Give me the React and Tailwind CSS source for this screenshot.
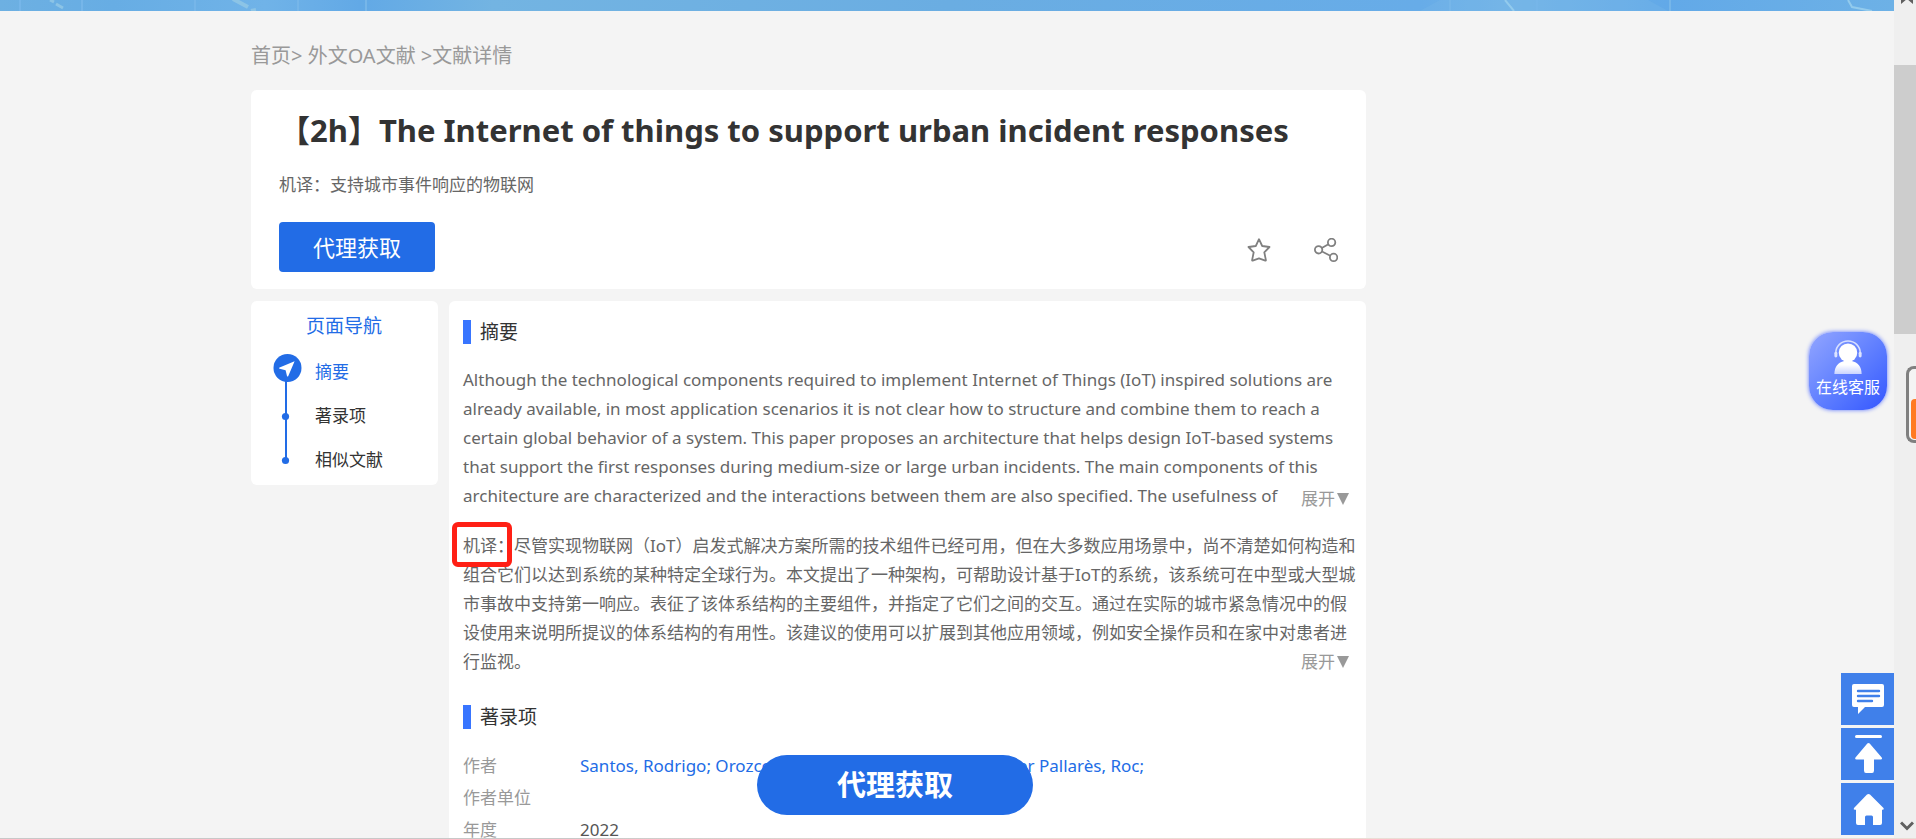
import React, { useState } from "react";

const abstractLines = [
  "Although the technological components required to implement Internet of Things (IoT) inspired solutions are",
  "already available, in most application scenarios it is not clear how to structure and combine them to reach a",
  "certain global behavior of a system. This paper proposes an architecture that helps design IoT-based systems",
  "that support the first responses during medium-size or large urban incidents. The main components of this",
  "architecture are characterized and the interactions between them are also specified. The usefulness of",
];

const translationLines = [
  "尽管实现物联网（IoT）启发式解决方案所需的技术组件已经可用，但在大多数应用场景中，尚不清楚如何构造和",
  "组合它们以达到系统的某种特定全球行为。本文提出了一种架构，可帮助设计基于IoT的系统，该系统可在中型或大型城",
  "市事故中支持第一响应。表征了该体系结构的主要组件，并指定了它们之间的交互。通过在实际的城市紧急情况中的假",
  "设使用来说明所提议的体系结构的有用性。该建议的使用可以扩展到其他应用领域，例如安全操作员和在家中对患者进",
  "行监视。",
];

const navItems = [
  { id: "abstract", label: "摘要" },
  { id: "record", label: "著录项" },
  { id: "similar", label: "相似文献" },
];

const Banner = () => (
  <header className="h-[11px] overflow-hidden bg-[#6aaee6]">
    <svg className="block h-full w-full" viewBox="0 0 1894 11" preserveAspectRatio="none" fill="none">
      <defs>
        <linearGradient id="sky" x1="0" x2="1">
          <stop offset="0" stopColor="#6db0e2" />
          <stop offset="0.06" stopColor="#67ade4" />
          <stop offset="0.14" stopColor="#70b3e8" />
          <stop offset="0.19" stopColor="#62a9e6" />
          <stop offset="0.26" stopColor="#73b4e2" />
          <stop offset="0.5" stopColor="#6aade2" />
          <stop offset="0.75" stopColor="#67ace8" />
          <stop offset="0.8" stopColor="#73b4e7" />
          <stop offset="0.88" stopColor="#62a9e8" />
          <stop offset="1" stopColor="#6db1e6" />
        </linearGradient>
      </defs>
      <rect width="1894" height="11" fill="url(#sky)" />
      <path d="M1420 11 1440 0H1648L1668 11Z" fill="#7ab8e8" fillOpacity="0.3" />
      <path d="M50 0l4 2M56 4l7 4" stroke="#8cc4e6" strokeWidth="3" />
      <path d="M233 -1l15 8M251 11l5 -1" stroke="#8cc4e6" strokeWidth="4" />
      <path d="M1505 0l9 11M1848 0l4 7 20 4" stroke="#93cbed" strokeWidth="2" />
      <path d="M20 0V11M82 0V11M195 0V11M298 0V11M366 0V11M1450 0V11M1537 0V11M1670 0V11" stroke="#76b6e9" strokeWidth="2" />
    </svg>
  </header>
);

const StarIcon = () => (
  <svg className="h-6 w-6" viewBox="0 0 24 24" fill="none" stroke="#808080" strokeWidth="1.8" strokeLinejoin="round">
    <path d="M12 1.200 15.200 8l7.300 1-5.200 5.300 1.600 7.800c.1.5-.2.7-.6.5L12 20.400l-6.300 2.200c-.4.2-.7 0-.6-.5l1.600-7.800L1.500 9l7.300-1Z" />
  </svg>
);

const ShareIcon = () => (
  <svg className="h-6 w-6" viewBox="0 0 24 24" fill="none" stroke="#808080" strokeWidth="1.8">
    <circle cx="4.6" cy="11.8" r="3.7" />
    <circle cx="17.6" cy="4.4" r="3.7" />
    <circle cx="19.6" cy="19.4" r="3.7" />
    <path d="m7.8 10 6.6-3.8M8 13.5l8.300 4.200" />
  </svg>
);

const SectionTitle = ({ children }) => (
  <div className="flex items-center gap-[9px]">
    <span className="h-6 w-2 bg-[#3875ff]" />
    <h2 className="text-[19px] leading-6 text-[#333]">{children}</h2>
  </div>
);

const ExpandButton = () => (
  <button className="flex shrink-0 items-center gap-[2px] text-[17px] leading-[29px] text-[#999]">
    展开
    <svg className="h-3 w-3" viewBox="0 0 12 12">
      <path d="M0 0h12L6 12Z" fill="#999" />
    </svg>
  </button>
);

const PageNav = () => {
  const [active, setActive] = useState("abstract");

  return (
    <nav className="w-[187px] shrink-0 rounded-md bg-white pt-[11px] pb-[3px]">
      <h3 className="pl-[55px] text-[19px] leading-7 text-[#226ce6]">页面导航</h3>
      <div className="flex gap-[13px] pt-[10px] pl-5">
        <svg className="mt-px h-[116px] w-[31px]" viewBox="0 0 31 116">
          <path d="M15 18V109" stroke="#226ce6" strokeWidth="2" />
          <circle cx="16.500" cy="17" r="14" fill="#226ce6" />
          <path d="M23.600 10.200 8.600 16.400c-.8.4-.7 1 .1 1.300l5.900 1.600 1.400 5.600c.3.8 1 .8 1.300 0Z" fill="#fff" />
          <circle cx="14.500" cy="65.500" r="3.600" fill="#226ce6" />
          <circle cx="14.500" cy="109.500" r="3.600" fill="#226ce6" />
        </svg>
        <ul className="text-[17px] leading-[44px]">
          {navItems.map((item) => (
            <li key={item.id}>
              <a
                href={`#${item.id}`}
                onClick={() => setActive(item.id)}
                className={active === item.id ? "text-[#226ce6]" : "text-[#333]"}
              >
                {item.label}
              </a>
            </li>
          ))}
        </ul>
      </div>
    </nav>
  );
};

const ServiceButton = () => (
  <button className="absolute top-[332px] right-[7px] flex h-[78px] w-[78px] flex-col items-center rounded-[24px] bg-linear-to-br from-[#93a5ff] to-[#3554ff] pt-2 text-white shadow-[0_0_4px_#5b74ff]">
    <svg className="h-[35px] w-[30px]" viewBox="0 0 30 36" fill="none">
      <defs>
        <linearGradient id="agent" x1="0" x2="0" y1="0" y2="1">
          <stop offset="0.3" stopColor="#fff" />
          <stop offset="1" stopColor="#c9d3ff" />
        </linearGradient>
      </defs>
      <path d="M2.500 13a12.500 12 0 0 1 25 0" stroke="#d8e0ff" strokeWidth="1.600" />
      <rect x="1" y="12" width="3" height="6" rx="1.500" fill="#dde4ff" />
      <rect x="26" y="12" width="3" height="6" rx="1.500" fill="#dde4ff" />
      <circle cx="15" cy="13" r="9.500" fill="#fff" />
      <path d="M1 35c0-8 4-12 10-13.500h8c6 1.500 10 5.500 10 13.500Z" fill="url(#agent)" />
    </svg>
    <span className="text-[16px] leading-6">在线客服</span>
  </button>
);

const SideTools = () => (
  <div className="absolute right-0 bottom-1 flex flex-col gap-[3px]">
    <button aria-label="message" className="flex h-[52px] w-[53px] items-center justify-center bg-[#4080ea]">
      <svg className="h-9 w-9" viewBox="0 0 36 36">
        <path d="M4 3h28q2 0 2 2v19q0 2-2 2H15l-7 7v-7H4q-2 0-2-2V5q0-2 2-2Z" fill="#fff" />
        <path d="M8 10h21M8 15h21M8 20h14" stroke="#4080ea" strokeWidth="2.400" strokeLinecap="round" />
      </svg>
    </button>
    <button aria-label="top" className="flex h-[52px] w-[53px] items-center justify-center bg-[#4080ea]">
      <svg className="h-10 w-9" viewBox="0 0 36 40" fill="#fff">
        <rect x="5" y="1" width="27" height="3" rx="1.500" />
        <path d="M17.300 9.500q1.200-1.200 2.400 0l12 14q1 2-1 2H24v11q0 2.500-2 2.500h-6q-2 0-2-2.500v-11H6.500q-2 0-1-2Z" />
      </svg>
    </button>
    <button aria-label="home" className="flex h-[52px] w-[53px] items-center justify-center bg-[#4080ea]">
      <svg className="h-9 w-9" viewBox="0 0 36 36" fill="#fff">
        <path d="M17 3.600q1.500-1.200 3 0L33.500 17q1 1.500-.8 1.700H32V32q0 2-2 2h-7v-8q0-1.500-1.500-1.500h-5Q15 24.500 15 26v8H8q-2 0-2-2V18.700h-1.200q-1.800-.2-.8-1.700Z" />
      </svg>
    </button>
  </div>
);

const ScrollRail = () => (
  <aside className="relative flex w-[22px] shrink-0 flex-col items-center justify-between bg-[#efefef]">
    <svg className="ml-1 h-[4px] w-3" viewBox="0 0 12 4">
      <path d="M0 0h12v4L6 -1 0 4Z" fill="#606060" />
    </svg>
    <div className="absolute top-[65px] h-[269px] w-full bg-[#cdcdcd]" />
    <svg className="mb-2 ml-1 h-[10px] w-[14px]" viewBox="0 0 14 10" fill="none">
      <path d="M1 1.500 7 7.500l6-6" stroke="#606060" strokeWidth="3" />
    </svg>
    <div className="absolute top-[366px] right-0 h-[77px] w-[10px] rounded-l-lg border-[3px] border-r-0 border-[#808080] bg-[#f4f4f4] pt-[30px] pb-[1px] pl-[2px]">
      <div className="h-full rounded-l-sm bg-[#ff7a22]" />
    </div>
  </aside>
);

const DetailPage = () => (
  <div className="mx-auto w-full max-w-[1392px]">
    <div className="max-w-[1115px]">
      <div className="pt-[31px] pb-5 text-[20px] leading-7 whitespace-pre text-[#999]">
        <a href="#home">首页</a>&gt; <a href="#oa">外文OA文献</a> &gt;<span>文献详情</span>
      </div>

      <div className="rounded-md bg-white px-7 pb-[17px]">
        <h1 className="pt-5 text-[31px] leading-10 font-bold whitespace-nowrap text-[#333]">
          【2h】The Internet of things to support urban incident responses
        </h1>
        <p className="pt-[22px] text-[17px] leading-[26px] text-[#666]">机译：支持城市事件响应的物联网</p>
        <div className="flex items-end justify-between pt-6">
          <button className="h-[50px] w-[156px] rounded bg-[#226ce6] text-[22px] text-white">代理获取</button>
          <div className="flex gap-[43px] pb-[10px]">
            <button aria-label="favorite"><StarIcon /></button>
            <button aria-label="share"><ShareIcon /></button>
          </div>
        </div>
      </div>

      <div className="flex items-start gap-[11px] pt-3">
        <PageNav />
        <main className="min-w-0 flex-1 rounded-md bg-white px-[14px] pt-[19px] pb-10">
          <SectionTitle>摘要</SectionTitle>
          <div className="relative pt-[21px] text-[17px] leading-[29px] text-[#666]">
            {abstractLines.map((line) => (
              <p key={line} className="whitespace-nowrap">{line}</p>
            ))}
            <div className="absolute right-[3px] -bottom-[3px]"><ExpandButton /></div>
          </div>
          <div className="relative mt-[21px] text-[17px] leading-[29px] text-[#666]">
            {translationLines.map((line, i) => (
              <p key={line} className="whitespace-nowrap">
                {i === 0 && (
                  <span className="relative">
                    机译：
                    <span className="absolute -top-3 -left-[11px] h-[45px] w-[60px] rounded-md border-[5px] border-[#ff2015]" />
                  </span>
                )}
                {line}
              </p>
            ))}
            <div className="absolute right-[3px] bottom-0"><ExpandButton /></div>
          </div>
          <div className="pt-[29px]">
            <SectionTitle>著录项</SectionTitle>
          </div>
          <dl className="grid grid-cols-[117px_1fr] pt-[21px] text-[17px] leading-8 text-[#999]">
            <dt>作者</dt>
            <dd className="text-[#226ce6]">
              <a href="#authors">Santos, Rodrigo; Orozco, Javier; Ochoa, Sergio; Meseguer Pallarès, Roc;</a>
            </dd>
            <dt>作者单位</dt>
            <dd />
            <dt>年度</dt>
            <dd className="text-[#555]">2022</dd>
          </dl>
        </main>
      </div>
    </div>
  </div>
);

export default function App() {
  return (
    <div className="relative flex h-screen overflow-hidden bg-[#f4f4f4] font-['Noto_Sans','Noto_Sans_CJK_SC',sans-serif]">
      <div className="relative min-w-0 flex-1">
        <Banner />
        <DetailPage />
        <button className="absolute bottom-6 left-[757px] h-[60px] w-[276px] rounded-full bg-[#226ce6] text-[29px] font-bold text-white">
          代理获取
        </button>
        <ServiceButton />
        <SideTools />
      </div>
      <ScrollRail />
      <div className="absolute inset-x-0 bottom-0 h-px bg-linear-to-r from-[#c8c8c8] from-30% to-[#eaddd5] to-50%" />
    </div>
  );
}
